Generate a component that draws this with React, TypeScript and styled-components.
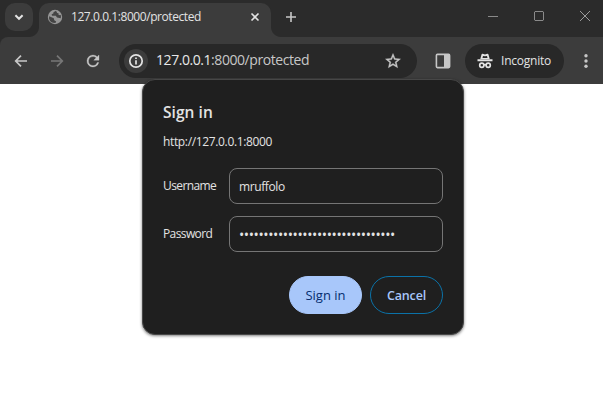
import React from 'react';
import styled, { createGlobalStyle } from 'styled-components';

const GlobalStyle = createGlobalStyle`
  * { box-sizing: border-box; }
  html, body { margin: 0; padding: 0; background: #fff; overflow: hidden; }
  body { font-family: 'Open Sans', 'Noto Sans', sans-serif; }
  svg { display: block; flex: none; }
  button, input { font-family: inherit; margin: 0; }
`;

const Window = styled.div`
  position: relative;
  width: 603px;
  height: 412px;
  background: #fff;
  overflow: hidden;
`;

const TabStrip = styled.div`
  display: flex;
  height: 37px;
  background: #2b2b2b;
`;

const IconButton = styled.button<{ $w: number; $h?: number; $bg?: string; $radius?: number }>`
  display: flex;
  flex: none;
  align-items: center;
  justify-content: center;
  width: ${p => p.$w}px;
  height: ${p => p.$h ?? p.$w}px;
  padding: 0;
  border: 0;
  border-radius: ${p => p.$radius ?? 0}px;
  background: ${p => p.$bg ?? 'transparent'};
`;

const TabSearch = styled(IconButton)`
  margin: 3px 6px 0 5px;
`;

const Tab = styled.div`
  position: relative;
  display: flex;
  align-items: center;
  width: 232px;
  height: 34px;
  margin-top: 3px;
  padding: 0 8px 6px 8px;
  border-radius: 10px 10px 0 0;
  background: #3c3c3c;

  &::before, &::after {
    content: '';
    position: absolute;
    bottom: 0;
    width: 10px;
    height: 10px;
  }
  &::before {
    left: -10px;
    background: radial-gradient(circle at 0 0, transparent 9.5px, #3c3c3c 10.5px);
  }
  &::after {
    right: -10px;
    background: radial-gradient(circle at 100% 0, transparent 9.5px, #3c3c3c 10.5px);
  }
`;

const TabTitle = styled.span`
  flex: 1;
  margin-left: 8px;
  color: #e3e3e3;
  font-size: 12px;
  line-height: 16px;
  letter-spacing: -0.43px;
  white-space: nowrap;
`;

const NewTab = styled(IconButton)`
  margin: 3px 0 0 6px;
`;

const WindowControls = styled.div`
  display: flex;
  margin-left: auto;
  height: 32px;
  align-items: center;
`;

const ToolbarWrap = styled.div`
  background: #2b2b2b;
`;

const Toolbar = styled.div`
  display: flex;
  align-items: center;
  height: 47px;
  padding: 0 3px 0 7px;
  border-top-left-radius: 8px;
  background: #3c3c3c;
`;

const Omnibox = styled.div`
  display: flex;
  align-items: center;
  width: 298px;
  height: 34px;
  margin-left: 12px;
  padding: 0 10px 0 5px;
  border-radius: 17px;
  background: #282828;
`;

const Url = styled.span`
  flex: 1;
  margin: 0 0 2px 8px;
  color: #c7c7c7;
  font-size: 14px;
  line-height: 20px;
  letter-spacing: -0.44px;
  white-space: nowrap;
`;

const Host = styled.span`
  color: #e8e8e8;
`;

const SidePanelButton = styled(IconButton)`
  margin-left: 9px;
`;

const Incognito = styled.div`
  display: flex;
  align-items: center;
  width: 99px;
  height: 34px;
  margin-left: 5px;
  padding-left: 12px;
  border-radius: 17px;
  background: #282828;
  color: #e3e3e3;
  font-size: 12px;
  letter-spacing: -0.22px;
`;

const IncognitoLabel = styled.span`
  margin: 0 0 1px 8px;
`;

const MenuButton = styled(IconButton)`
  margin-left: 8px;
`;

const Dialog = styled.form`
  position: absolute;
  left: 142px;
  top: 79px;
  width: 322px;
  height: 256px;
  padding: 21px 20px 0;
  border: 1px solid #474747;
  border-radius: 13px;
  background: #1f1f1f;
  box-shadow: 0 1px 3px rgba(0, 0, 0, 0.5);
  color: #e3e3e3;
`;

const Title = styled.h1`
  margin: 0;
  font-size: 15.5px;
  font-weight: 600;
  line-height: 22px;
  letter-spacing: 0.05px;
`;

const Origin = styled.p`
  margin: 11px 0 18px;
  font-size: 12px;
  line-height: 16px;
  letter-spacing: -0.35px;
`;

const Field = styled.label`
  display: grid;
  grid-template-columns: 66px 214px;
  align-items: center;
  height: 36px;
  margin-bottom: 12px;
`;

const FieldLabel = styled.span<{ $tracking: number }>`
  font-size: 12px;
  line-height: 16px;
  letter-spacing: ${p => p.$tracking}px;
`;

const Input = styled.input<{ $tracking: number; $size?: number }>`
  width: 214px;
  height: 36px;
  padding: 0 9px;
  border: 1px solid #757575;
  border-radius: 8px;
  outline: 0;
  background: transparent;
  color: #e3e3e3;
  font-size: ${p => p.$size ?? 12}px;
  letter-spacing: ${p => p.$tracking}px;
`;

const Actions = styled.div`
  display: flex;
  justify-content: flex-end;
  gap: 8px;
  margin-top: 24px;
`;

const Button = styled.button<{ $primary?: boolean }>`
  width: 73px;
  height: 38px;
  padding: 0;
  border: 1px solid ${p => (p.$primary ? '#a8c7fa' : '#0b72a8')};
  border-radius: 19px;
  background: ${p => (p.$primary ? '#a8c7fa' : 'transparent')};
  color: ${p => (p.$primary ? '#062e6f' : '#a8c7fa')};
  font-size: ${p => (p.$primary ? 13 : 12.5)}px;
  font-weight: ${p => (p.$primary ? 500 : 600)};
  letter-spacing: ${p => (p.$primary ? 0 : -0.15)}px;
`;

const Line = ({ size, d, color = '#c7c7c7', width = 1.7 }: { size: number; d: string; color?: string; width?: number }) => (
  <svg width={size} height={size} viewBox={`0 0 ${size} ${size}`} fill="none" stroke={color} strokeWidth={width}>
    <path d={d} />
  </svg>
);

const Globe = () => (
  <svg width="16" height="16" viewBox="0 0 16 16">
    <circle cx="8" cy="8" r="7.2" fill="#969696" />
    <path d="M2.2 7.2 6.8 9.2 7.3 11.2 9.2 12.5 8.4 14 Q3 14 2 9.5ZM9 1.8 6.5 3.2 6.2 4.7 4.7 5.1 5 6.7 8.8 6.8 10 8.5 13.8 9.2 14 6.2 11.5 6 11.7 4.5 10.2 4Z" fill="#444" />
  </svg>
);

const Info = () => (
  <svg width="16" height="16" viewBox="0 0 16 16" fill="none">
    <circle cx="8" cy="8" r="6.2" stroke="#e3e3e3" strokeWidth="1.7" />
    <path d="M8 7.2V11.5M8 4.5V6" stroke="#e3e3e3" strokeWidth="1.7" />
  </svg>
);

const Star = () => (
  <svg width="18" height="18" viewBox="0 0 24 24" fill="#c7c7c7" stroke="#c7c7c7" strokeWidth=".5">
    <path d="m22 9.24-7.19-.62L12 2 9.19 8.63 2 9.24l5.46 4.73L5.82 21 12 17.27 18.18 21l-1.63-7.03zM12 15.4l-3.76 2.27 1-4.28-3.32-2.88 4.38-.38L12 6.1l1.71 4.04 4.38.38-3.32 2.88 1 4.28z" />
  </svg>
);

const SidePanel = () => (
  <svg width="16" height="16" viewBox="0 0 16 16">
    <rect x="1.4" y="1.4" width="13.2" height="13.2" rx="1" fill="none" stroke="#c7c7c7" strokeWidth="1.6" />
    <path d="M9 1H14V15H9Z" fill="#c7c7c7" />
  </svg>
);

const Spy = () => (
  <svg width="16" height="16" viewBox="0 0 16 16" fill="#e3e3e3">
    <path d="M3.3 6 4.5 1.6Q4.8.6 5.8.8L8 1.4 10.2.8Q11.2.6 11.5 1.6L12.7 6ZM.5 6.2H15.5V8.2H.5Z" />
    <path d="M5.5 5 6 2.9 8 3.3 10 2.9 10.5 5Z" fill="#282828" />
    <g fill="none" stroke="#e3e3e3" strokeWidth="1.7">
      <circle cx="4.8" cy="12.2" r="2.1" />
      <circle cx="11.2" cy="12.2" r="2.1" />
      <path d="M6.6 12Q8 11 9.4 12" />
    </g>
  </svg>
);

const Reload = () => (
  <svg width="18" height="18" viewBox="0 0 24 24" fill="#c7c7c7" stroke="#c7c7c7" strokeWidth=".4">
    <path d="M17.65 6.35A7.96 7.96 0 0 0 12 4a8 8 0 1 0 7.73 10h-2.08A6 6 0 1 1 12 6c1.66 0 3.14.69 4.22 1.78L13 11h7V4z" />
  </svg>
);

const Kebab = () => (
  <svg width="16" height="16" viewBox="0 0 16 16" fill="#c7c7c7">
    <circle cx="8" cy="2.8" r="1.7" />
    <circle cx="8" cy="8" r="1.7" />
    <circle cx="8" cy="13.2" r="1.7" />
  </svg>
);

const App = () => (
  <>
    <GlobalStyle />
    <Window>
      <TabStrip>
        <TabSearch $w={28} $bg="#3c3c3c" $radius={10} aria-label="Search tabs">
          <Line size={12} d="M2.4 4.2 6 7.8 9.6 4.2" color="#e3e3e3" width={2} />
        </TabSearch>
        <Tab>
          <Globe />
          <TabTitle>127.0.0.1:8000/protected</TabTitle>
          <IconButton $w={16} aria-label="Close tab">
            <Line size={12} d="M2.5 2.5 9.5 9.5M9.5 2.5 2.5 9.5" color="#e3e3e3" width={1.6} />
          </IconButton>
        </Tab>
        <NewTab $w={28} aria-label="New tab">
          <Line size={12} d="M6 1V11M1 6H11" width={1.6} />
        </NewTab>
        <WindowControls>
          <IconButton $w={46} $h={32} aria-label="Minimize">
            <Line size={10} d="M0 5.5H10" width={1} color="#8a8a8a" />
          </IconButton>
          <IconButton $w={46} $h={32} aria-label="Maximize">
            <Line size={10} d="M1 .5H9L9.5 1V9L9 9.5H1L.5 9V1Z" width={1} color="#8a8a8a" />
          </IconButton>
          <IconButton $w={41} $h={32} aria-label="Close">
            <Line size={16} d="M5 3 15 13M15 3 5 13" width={1} color="#9a9a9a" />
          </IconButton>
        </WindowControls>
      </TabStrip>
      <ToolbarWrap>
        <Toolbar>
          <IconButton $w={28} aria-label="Back">
            <Line size={14} d="M13 7H2M7 1.7 1.7 7 7 12.3" />
          </IconButton>
          <IconButton $w={44} aria-label="Forward">
            <Line size={14} d="M1 7H12M7 1.7 12.3 7 7 12.3" color="#777" />
          </IconButton>
          <IconButton $w={28} aria-label="Reload">
            <Reload />
          </IconButton>
          <Omnibox>
            <IconButton $w={24} $bg="#3c3c3c" $radius={12} aria-label="Site information">
              <Info />
            </IconButton>
            <Url><Host>127.0.0.1</Host>:8000/protected</Url>
            <IconButton $w={28} aria-label="Bookmark">
              <Star />
            </IconButton>
          </Omnibox>
          <SidePanelButton $w={34} aria-label="Side panel">
            <SidePanel />
          </SidePanelButton>
          <Incognito>
            <Spy />
            <IncognitoLabel>Incognito</IncognitoLabel>
          </Incognito>
          <MenuButton $w={28} aria-label="Menu">
            <Kebab />
          </MenuButton>
        </Toolbar>
      </ToolbarWrap>
      <Dialog>
        <Title>Sign in</Title>
        <Origin>http://127.0.0.1:8000</Origin>
        <Field>
          <FieldLabel $tracking={-0.6}>Username</FieldLabel>
          <Input $tracking={-0.4} defaultValue="mruffolo" />
        </Field>
        <Field>
          <FieldLabel $tracking={-0.6}>Password</FieldLabel>
          <Input $tracking={-0.39} $size={14} defaultValue={'•'.repeat(32)} />
        </Field>
        <Actions>
          <Button type="button" $primary>Sign in</Button>
          <Button type="button">Cancel</Button>
        </Actions>
      </Dialog>
    </Window>
  </>
);

export default App;
